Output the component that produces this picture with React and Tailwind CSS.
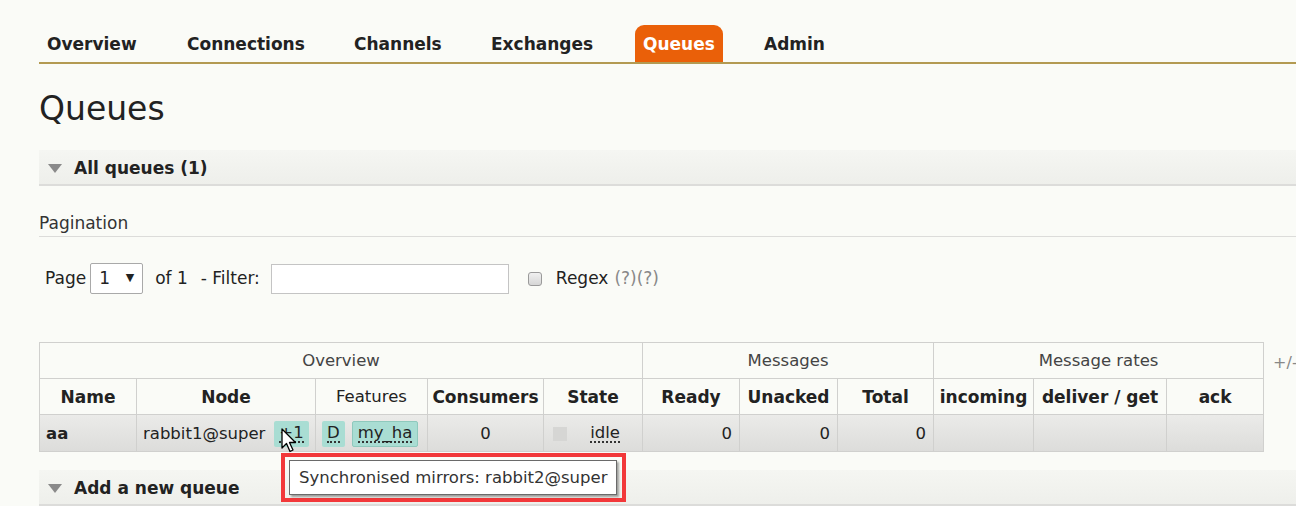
import React from 'react';

const tabs = [
  { label: 'Overview', w: 'w-[140px]' },
  { label: 'Connections', w: 'w-[167px]' },
  { label: 'Channels', w: 'w-[137px]' },
  { label: 'Exchanges', w: 'w-[152px]' },
  { label: 'Queues', w: 'w-[121px]', active: true },
  { label: 'Admin', w: 'w-[120px]' },
];

// column widths of the queue table, left to right
const cols = [97, 179, 112, 116, 99, 97, 98, 96, 100, 133, 97];

const Badge = ({ children, border }) => (
  <span
    className={`inline-flex items-center h-[26px] px-[5px] bg-[#a9ddd3] rounded-[2px] ${
      border ? 'border border-[#8fc9bd]' : ''
    }`}
  >
    <span className="leading-[16px] border-b-2 border-dotted border-[#333]">{children}</span>
  </span>
);

const SectionBand = ({ title, className = '' }) => (
  <div
    className={`h-[36px] flex items-center gap-[12px] pl-[9px] pt-[3px] bg-[linear-gradient(to_bottom,#f5f6f2,#eeefeb)] border-b-2 border-[#dcdcda] ${className}`}
  >
    <span className="w-0 h-0 border-l-[7px] border-r-[7px] border-t-[9px] border-l-transparent border-r-transparent border-t-[#8a8a8a]" />
    <span className="font-bold text-[17px] text-[#222]">{title}</span>
  </div>
);

const Cursor = () => (
  <svg width="18" height="26" viewBox="0 0 18 26" className="absolute left-[281px] top-[428px]">
    <path
      d="M1 1 L1 20 L5.5 15.5 L9 23.5 L12 22 L8.5 14.5 L14.5 14.5 Z"
      fill="#fff"
      stroke="#000"
      strokeWidth="1.3"
      strokeLinejoin="round"
    />
  </svg>
);

const cell = 'border border-[#d0d0ce] pt-[2px]';

export default function App() {
  return (
    <div className="relative w-[1296px] h-[506px] overflow-hidden bg-[#fafbf7] font-['DejaVu_Sans',sans-serif] text-[#222]">
      <div className="pl-[39px]">
        {/* Top nav */}
        <div className="mt-[25px] flex items-end border-b-2 border-[#b39a52]">
          {tabs.map((t) => (
            <div key={t.label} className={`${t.w} h-[37px] flex items-end`}>
              <span
                className={`h-[37px] flex items-center px-[8px] pt-[2px] text-[17px] font-bold rounded-t-[9px] ${
                  t.active ? 'bg-[#ea6009] text-white' : 'text-[#222]'
                }`}
              >
                {t.label}
              </span>
            </div>
          ))}
        </div>

        <h1 className="mt-[25px] h-[40px] leading-[40px] text-[33px] font-normal text-[#222]">Queues</h1>

        <SectionBand title="All queues (1)" className="mt-[21px]" />

        <div className="mt-[25px] h-[26px] leading-[24px] text-[17px] text-[#333] border-b border-[#dcdcda]">
          Pagination
        </div>

        {/* Pagination controls */}
        <div className="mt-[25px] h-[32px] flex items-center pt-[1px] text-[17px] text-[#222]">
          <span className="ml-[6px]">Page</span>
          <span className="ml-[4px] w-[53px] h-[31px] flex items-center justify-between px-[8px] border border-[#a9a9a9] rounded-[2px] bg-white">
            <span>1</span>
            <span className="text-[11px]">▼</span>
          </span>
          <span className="ml-[12px]">of 1</span>
          <span className="ml-[13px]">- Filter:</span>
          <span className="ml-[11px] w-[238px] h-[30px] border border-[#c4c4c4] bg-white" />
          <span className="ml-[19px] w-[14px] h-[14px] rounded-[3px] border border-[#9a9a9a] bg-[linear-gradient(to_bottom,#f0f0f0,#d6d6d6)]" />
          <span className="ml-[14px]">Regex</span>
          <span className="ml-[6px] text-[#888]">(?)(?)</span>
        </div>

        {/* Queue table */}
        <div className="mt-[48px] flex items-start">
          <table className="table-fixed border-collapse text-[17px] w-[1224px]">
            <colgroup>
              {cols.map((w, i) => (
                <col key={i} style={{ width: w }} />
              ))}
            </colgroup>
            <thead>
              <tr className="h-[36px] text-[#444]">
                <th colSpan={5} className={`${cell} font-normal text-[16.5px]`}>Overview</th>
                <th colSpan={3} className={`${cell} font-normal text-[16.5px]`}>Messages</th>
                <th colSpan={3} className={`${cell} font-normal text-[16.5px]`}>Message rates</th>
              </tr>
              <tr className="h-[36px] text-[#222]">
                <th className={`${cell} font-bold`}>Name</th>
                <th className={`${cell} font-bold`}>Node</th>
                <th className={`${cell} font-normal text-[16.5px]`}>Features</th>
                <th className={`${cell} font-bold whitespace-nowrap`}>Consumers</th>
                <th className={`${cell} font-bold`}>State</th>
                <th className={`${cell} font-bold`}>Ready</th>
                <th className={`${cell} font-bold`}>Unacked</th>
                <th className={`${cell} font-bold`}>Total</th>
                <th className={`${cell} font-bold`}>incoming</th>
                <th className={`${cell} font-bold whitespace-nowrap`}>deliver / get</th>
                <th className={`${cell} font-bold`}>ack</th>
              </tr>
            </thead>
            <tbody>
              <tr className="h-[37px] bg-[linear-gradient(to_bottom,#ebebe9,#dcdcda)] text-[16.5px]">
                <td className={`${cell} px-[6px] font-bold`}>aa</td>
                <td className={`${cell} pl-[6px]`}>
                  <span className="flex items-center gap-[9px] whitespace-nowrap">
                    rabbit1@super <Badge>+1</Badge>
                  </span>
                </td>
                <td className={`${cell} pl-[6px]`}>
                  <span className="flex items-center gap-[7px]">
                    <Badge>D</Badge>
                    <Badge border>my_ha</Badge>
                  </span>
                </td>
                <td className={`${cell} text-center`}>0</td>
                <td className={`${cell} pl-[9px] pr-[22px]`}>
                  <span className="flex items-center justify-between">
                    <span className="w-[14px] h-[14px] bg-[#d6d6d4]" />
                    <span className="leading-[16px] border-b-2 border-dotted border-[#333]">idle</span>
                  </span>
                </td>
                <td className={`${cell} text-right pr-[7px]`}>0</td>
                <td className={`${cell} text-right pr-[7px]`}>0</td>
                <td className={`${cell} text-right pr-[7px]`}>0</td>
                <td className={cell} />
                <td className={cell} />
                <td className={cell} />
              </tr>
            </tbody>
          </table>
          <span className="ml-[9px] mt-[9px] text-[16px] text-[#888] whitespace-nowrap">+/-</span>
        </div>

        <SectionBand title="Add a new queue" className="mt-[18px]" />
      </div>

      {/* Tooltip with highlight */}
      <div className="absolute left-[281px] top-[453px] w-[345px] h-[49px] border-[4px] border-[#f2383a] pl-[4px] pt-[3px]">
        <div className="w-[328px] h-[35px] bg-white border border-[#6a6a6a] shadow-[2px_2px_2px_rgba(0,0,0,0.35)] flex items-center pl-[9px] pt-[1px] text-[16.5px] text-[#333] whitespace-nowrap">
          Synchronised mirrors: rabbit2@super
        </div>
      </div>

      <Cursor />
    </div>
  );
}
